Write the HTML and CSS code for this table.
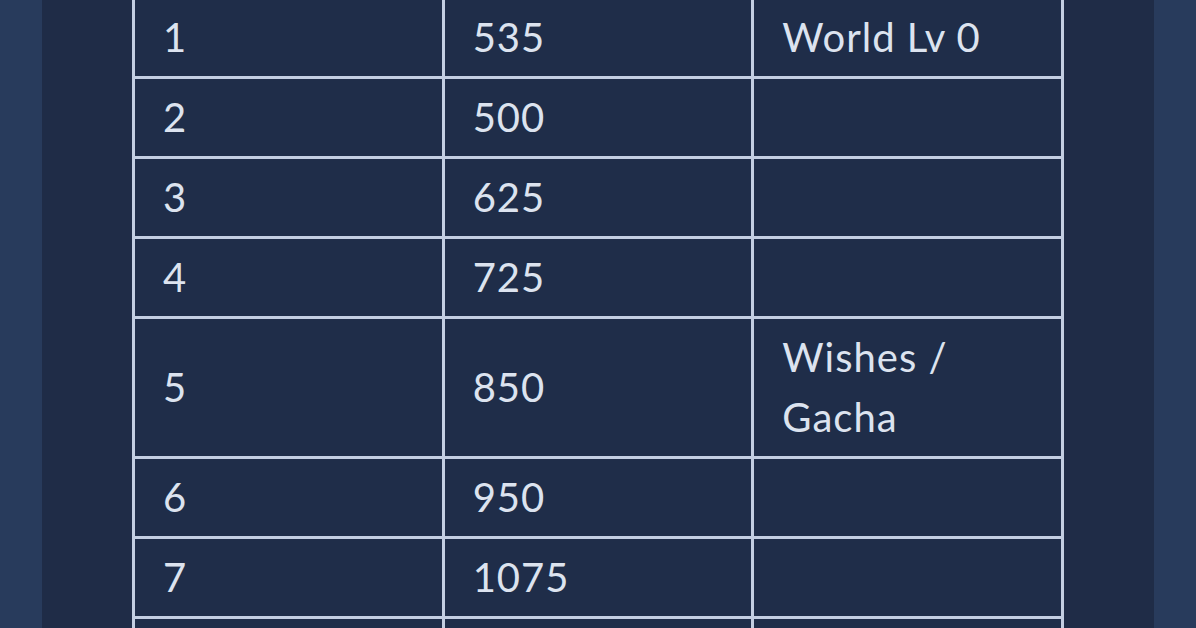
FILE: index.html
```html
<!DOCTYPE html>
<html lang="en">
<head>
<meta charset="utf-8">
<title>Table</title>
<link rel="stylesheet" href="styles.css">
</head>
<body>
<div class="frame">
  <div class="panel">
    <table class="levels">
      <colgroup><col><col><col></colgroup>
      <tbody>
        <tr><td>1</td><td>535</td><td>World Lv 0</td></tr>
        <tr><td>2</td><td>500</td><td></td></tr>
        <tr><td>3</td><td>625</td><td></td></tr>
        <tr><td>4</td><td>725</td><td></td></tr>
        <tr><td>5</td><td>850</td><td>Wishes /<br>Gacha</td></tr>
        <tr><td>6</td><td>950</td><td></td></tr>
        <tr><td>7</td><td>1075</td><td></td></tr>
        <tr><td>&nbsp;</td><td></td><td></td></tr>
      </tbody>
    </table>
  </div>
</div>
</body>
</html>
```
FILE: styles.css
```css
html, body {
  margin: 0;
  padding: 0;
  height: 100%;
  overflow: hidden;
}
body {
  background: #283b5c;
  font-family: "Lato", "Liberation Sans", sans-serif;
}
.frame {
  height: 100%;
  padding: 0 42px;
  box-sizing: border-box;
  display: flow-root;
}
.panel {
  height: 100%;
  background: #1f2c47;
  padding: 0 90px;
  box-sizing: border-box;
  display: flow-root;
}
.levels {
  width: 932px;
  table-layout: fixed;
  border-collapse: collapse;
  margin-top: -4px;
  background: #1f2d49;
  color: #dce3ef;
  font-size: 40px;
  line-height: 60px;
  letter-spacing: 1px;
}
.levels td {
  border: 3px solid #c3cee2;
  padding: 8px 10px 9px 28px;
  vertical-align: middle;
  text-align: left;
}
```
